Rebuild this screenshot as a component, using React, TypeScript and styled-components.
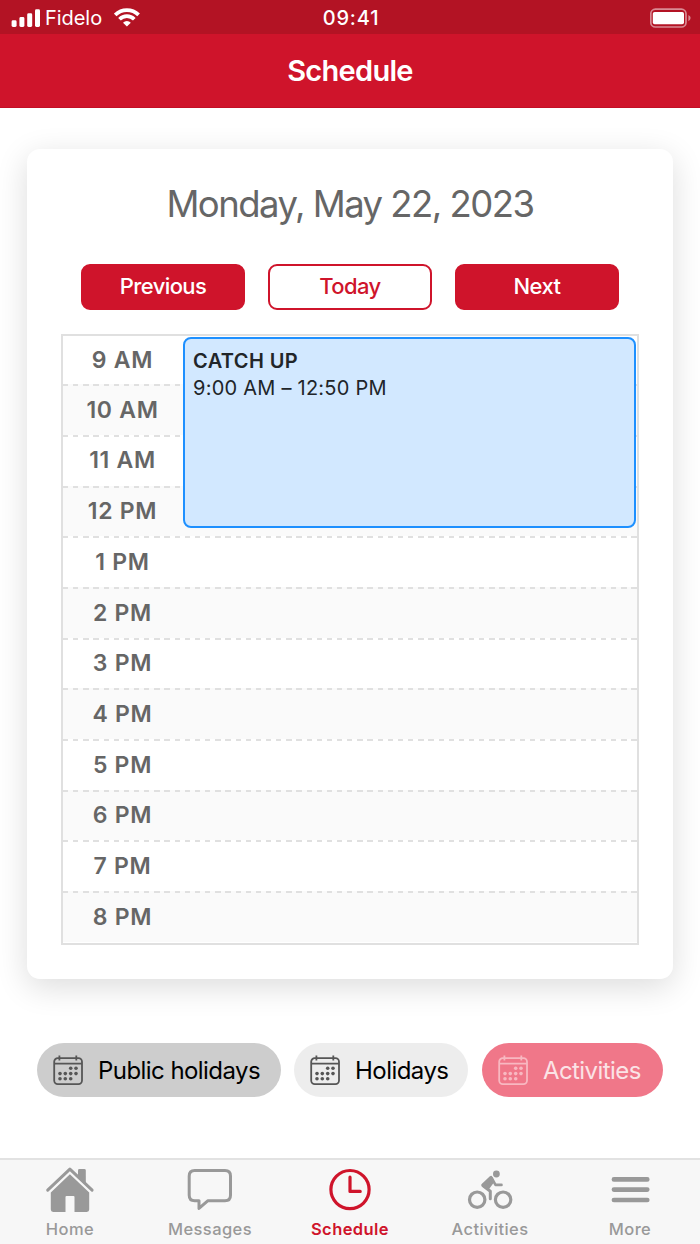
import React from "react";
import styled, { createGlobalStyle, css } from "styled-components";

const red = "#cf142b";
const grey = "#999999";

const GlobalStyle = createGlobalStyle`
  *, *::before, *::after { box-sizing: border-box; }
  body {
    margin: 0;
    background: #fff;
    font-family: Inter, "Liberation Sans", sans-serif;
    -webkit-font-smoothing: antialiased;
  }
`;

const Screen = styled.div`
  display: flex;
  flex-direction: column;
  width: 700px;
  height: 1244px;
  overflow: hidden;
  background: #fff;
`;

const StatusBar = styled.div`
  display: grid;
  grid-template-columns: 1fr auto 1fr;
  align-items: center;
  height: 34px;
  padding: 0 9px 0 11px;
  background: #b31324;
  color: #fff;
  font-size: 20px;
  line-height: 34px;
`;

const Carrier = styled.div`
  display: flex;
  align-items: center;
  svg { display: block; }
`;

const CarrierName = styled.span`
  margin: 1px 12px 0 4px;
  font-size: 20px;
  letter-spacing: -0.05px;
`;

const Clock = styled.span`
  padding-top: 1px;
  font-weight: 500;
  letter-spacing: 0.8px;
`;

const BatterySlot = styled.div`
  display: flex;
  justify-content: flex-end;
`;

const Header = styled.header`
  display: flex;
  align-items: center;
  justify-content: center;
  height: 74px;
  padding-top: 1px;
  border-bottom: 1px solid #c20f26;
  background: ${red};
`;

const HeaderTitle = styled.h1`
  margin: 0;
  color: #fff;
  font-size: 29px;
  font-weight: 600;
  line-height: 36px;
  letter-spacing: -0.7px;
`;

const Content = styled.main`
  flex: 1;
  padding: 41px 27px 0;
`;

const Card = styled.section`
  height: 830px;
  padding: 33px 34px 0;
  border-radius: 13px;
  background: #fff;
  box-shadow: 0 8px 32px rgba(0, 0, 0, 0.14);
`;

const DateTitle = styled.h2`
  margin: 0;
  color: #666;
  font-size: 36.5px;
  font-weight: 400;
  line-height: 44px;
  letter-spacing: -1.52px;
  text-align: center;
`;

const ButtonRow = styled.div`
  display: flex;
  justify-content: space-between;
  margin: 38px 20px 24px;
`;

const NavButton = styled.button<{ $outlined?: boolean }>`
  width: 164px;
  height: 46px;
  padding: 0 0 1px;
  border: 2px solid ${red};
  border-radius: 9px;
  background: ${(p) => (p.$outlined ? "#fff" : red)};
  color: ${(p) => (p.$outlined ? red : "#fff")};
  font: 500 22px/41px Inter, sans-serif;
  letter-spacing: -0.6px;
`;

const DayGrid = styled.div`
  position: relative;
  height: 611px;
  border: 2px solid #e0e0e0;
`;

const HourRow = styled.div<{ $shaded: boolean }>`
  height: 50.7px;
  padding-top: 1.5px;
  background-color: ${(p) => (p.$shaded ? "#fafafa" : "#fff")};
  &:first-child { height: 48.3px; padding-top: 0; }
  &:last-child { height: 51.7px; }
  & + & {
    background-image: repeating-linear-gradient(90deg, #e0e0e0 0 5.3px, transparent 5.3px 10.15px);
    background-size: 100% 2px;
    background-repeat: no-repeat;
  }
`;

const HourLabel = styled.div`
  width: 119px;
  color: #666;
  font-size: 23px;
  font-weight: 600;
  line-height: 48px;
  letter-spacing: 0.7px;
  text-align: center;
`;

const Event = styled.article`
  position: absolute;
  top: 1px;
  left: 120px;
  width: 453px;
  height: 191px;
  padding: 9px 8px;
  border: 2px solid #1e90ff;
  border-radius: 8px;
  background: #d2e8ff;
  color: #212529;
  font-size: 20px;
  line-height: 27px;
  letter-spacing: 0.24px;
`;

const EventTitle = styled.div`
  font-weight: 600;
  letter-spacing: 0.4px;
`;

const Chips = styled.div`
  display: flex;
  gap: 13.5px;
  margin: 64px 0 0 10px;
`;

type Tone = "dark" | "light" | "red";

const chipTones = {
  dark: css`background: #cdcdcd; color: #000;`,
  light: css`background: #ededed; color: #000;`,
  red: css`background: #f07789; color: #fbe3e6;`,
};

const Chip = styled.div<{ $tone: Tone; $width: number }>`
  display: flex;
  align-items: center;
  gap: 14px;
  width: ${(p) => p.$width}px;
  height: 54px;
  padding-left: 16px;
  border-radius: 27px;
  font-size: 24px;
  letter-spacing: -0.56px;
  white-space: nowrap;
  ${(p) => chipTones[p.$tone]}
  svg {
    flex: none;
    color: ${(p) => (p.$tone === "red" ? "#f8b8c1" : "#565656")};
  }
`;

const TabBar = styled.nav`
  display: grid;
  grid-template-columns: repeat(5, 1fr);
  height: 86px;
  border-top: 2px solid #e2e2e2;
  background: #f7f7f7;
`;

const Tab = styled.div<{ $active?: boolean }>`
  display: flex;
  flex-direction: column;
  align-items: center;
  padding-top: 4px;
  color: ${(p) => (p.$active ? red : grey)};
  font-size: 16.5px;
  font-weight: ${(p) => (p.$active ? 600 : 500)};
  line-height: 20px;
  letter-spacing: 0.42px;
  svg { display: block; margin-bottom: 5px; }
`;

const SignalIcon = () => (
  <svg width="30" height="20" viewBox="11 7 30 20" fill="#fff">
    <rect x="11.6" y="19.3" width="5" height="6.7" rx="1.4" />
    <rect x="19.4" y="16" width="5" height="10" rx="1.4" />
    <rect x="27.2" y="12.3" width="5" height="13.7" rx="1.4" />
    <rect x="35" y="8.3" width="5" height="17.7" rx="1.4" />
  </svg>
);

const WifiIcon = () => (
  <svg width="26" height="20" viewBox="114.5 7.5 26 20" fill="none" stroke="#fff" strokeWidth="3.7">
    <path d="M115.7 14.4a16.6 16.6 0 0 1 23.4 0" />
    <path d="M120 18.8a10.4 10.4 0 0 1 14.8 0" />
    <path d="M127.4 26l-3.9-3.8a5.6 5.6 0 0 1 7.8 0z" fill="#fff" stroke="none" />
  </svg>
);

const BatteryIcon = () => (
  <svg width="41" height="20" viewBox="650 7 41 20">
    <rect x="650.8" y="8.2" width="35.2" height="17.8" rx="4.6" fill="none" stroke="#d98a93" strokeWidth="1.7" />
    <rect x="652.8" y="11" width="31.2" height="12.3" rx="1.8" fill="#fff" />
    <path d="M688.4 14v6.2q2.2-1 2.2-3.1t-2.2-3.1z" fill="#d98a93" />
  </svg>
);

const CalendarIcon = () => {
  const dots = [
    [20.7, 13.3], [26, 13.3],
    [10, 18.6], [15.3, 18.6], [20.7, 18.6], [26, 18.6],
    [10, 23.7], [15.3, 23.7], [20.7, 23.7],
  ];
  return (
    <svg width="31" height="31" viewBox="3 0 31 31" fill="none" stroke="currentColor" strokeWidth="1.8">
      <rect x="4.2" y="3.2" width="27.8" height="26" rx="3.6" />
      <path d="M4.2 8.6h27.8M9.4 0.4v5M26.3 0.4v5" />
      <g fill="currentColor" stroke="none">
        {dots.map(([x, y]) => <circle key={`${x}-${y}`} cx={x} cy={y} r="1.8" />)}
      </g>
    </svg>
  );
};

const HomeIcon = () => (
  <svg width="52" height="50" viewBox="43.5 1164 52 50" fill="currentColor">
    <path d="M47.2 1190.2L69.4 1169.1L91.6 1190.2" fill="none" stroke="currentColor" strokeWidth="3" strokeLinecap="round" strokeLinejoin="round" />
    <path d="M77.5 1176v-5.6q0-1.4 1.4-1.4h5q1.4 0 1.4 1.4v13.4z" />
    <path d="M69.4 1174.3L88.7 1192.6V1209.6q0 2.4-2.4 2.4H74V1197q0-1-1-1h-7q-1 0-1 1v15H52.7q-2.4 0-2.4-2.4V1192.6z" />
  </svg>
);

const MessageIcon = () => (
  <svg width="52" height="50" viewBox="184 1164 52 50" fill="none" stroke="currentColor" strokeWidth="3" strokeLinejoin="round">
    <path d="M194.7 1170.6h30.3q5.5 0 5.5 5.5v19.2q0 5.5-5.5 5.5h-17.3l-8.7 7.6v-7.6h-4.3q-5.5 0-5.5-5.5v-19.2q0-5.5 5.5-5.5z" />
  </svg>
);

const ClockIcon = () => (
  <svg width="52" height="50" viewBox="324 1164 52 50" fill="none" stroke="currentColor" strokeWidth="3.2" strokeLinecap="round" strokeLinejoin="round">
    <circle cx="350" cy="1189.6" r="19.1" />
    <path d="M350 1177.2v14.2h10.2" />
  </svg>
);

const BikeIcon = () => (
  <svg width="52" height="50" viewBox="464 1164 52 50" fill="none" stroke="currentColor" strokeWidth="3" strokeLinecap="round" strokeLinejoin="round">
    <circle cx="477.2" cy="1199.7" r="7.7" strokeWidth="3.2" />
    <circle cx="503.1" cy="1199.7" r="7.7" strokeWidth="3.2" />
    <circle cx="496.4" cy="1174" r="3.4" fill="currentColor" stroke="none" />
    <path d="M490.9 1177.4l-8.2 7.8 5.2 2.9 4.8-6.4z" fill="currentColor" />
    <path d="M491.8 1178.2l3.7 6.7h6" strokeWidth="2.6" />
    <path d="M483.4 1186l6.9 5.2v7.6" />
  </svg>
);

const MenuIcon = () => (
  <svg width="52" height="50" viewBox="604 1164 52 50" stroke="currentColor" strokeWidth="4.6" strokeLinecap="round">
    <path d="M613.9 1179.4h33.4M613.9 1189.6h33.4M613.9 1200h33.4" />
  </svg>
);

const hours = ["9 AM", "10 AM", "11 AM", "12 PM", "1 PM", "2 PM", "3 PM", "4 PM", "5 PM", "6 PM", "7 PM", "8 PM"];

export default function App() {
  return (
    <Screen>
      <GlobalStyle />
      <StatusBar>
        <Carrier>
          <SignalIcon />
          <CarrierName>Fidelo</CarrierName>
          <WifiIcon />
        </Carrier>
        <Clock>09:41</Clock>
        <BatterySlot>
          <BatteryIcon />
        </BatterySlot>
      </StatusBar>
      <Header>
        <HeaderTitle>Schedule</HeaderTitle>
      </Header>
      <Content>
        <Card>
          <DateTitle>Monday, May 22, 2023</DateTitle>
          <ButtonRow>
            <NavButton>Previous</NavButton>
            <NavButton $outlined>Today</NavButton>
            <NavButton>Next</NavButton>
          </ButtonRow>
          <DayGrid>
            {hours.map((hour, i) => (
              <HourRow key={hour} $shaded={i % 2 === 1}>
                <HourLabel>{hour}</HourLabel>
              </HourRow>
            ))}
            <Event>
              <EventTitle>CATCH UP</EventTitle>
              <div>9:00 AM – 12:50 PM</div>
            </Event>
          </DayGrid>
        </Card>
        <Chips>
          <Chip $tone="dark" $width={243.6}><CalendarIcon />Public holidays</Chip>
          <Chip $tone="light" $width={174.3}><CalendarIcon />Holidays</Chip>
          <Chip $tone="red" $width={181}><CalendarIcon />Activities</Chip>
        </Chips>
      </Content>
      <TabBar>
        <Tab><HomeIcon />Home</Tab>
        <Tab><MessageIcon />Messages</Tab>
        <Tab $active><ClockIcon />Schedule</Tab>
        <Tab><BikeIcon />Activities</Tab>
        <Tab><MenuIcon />More</Tab>
      </TabBar>
    </Screen>
  );
}
